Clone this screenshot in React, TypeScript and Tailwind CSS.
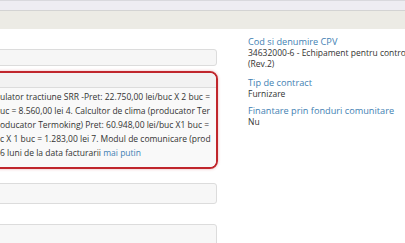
export default function App() {
  const lines = [
    'ulator tractiune SRR -Pret: 22.750,00 lei/buc X 2 buc =',
    'uc = 8.560,00 lei 4. Calcultor de clima (producator Ter',
    'oducator Termoking) Pret: 60.948,00 lei/buc X1 buc =',
    'c X 1 buc = 1.283,00 lei 7. Modul de comunicare (prod',
  ];

  return (
    <div className="w-[405px] h-[243px] overflow-hidden bg-white font-['Open_Sans',sans-serif] text-[#333]">
      {/* top bars */}
      <div className="h-[1px] bg-[#d9d9dd]" />
      <div className="h-[10px] bg-[#eeedf2] border-b border-[#d3d3d3]" />
      <div className="h-[18px] bg-[#ecebe5]" />

      <div className="flex">
        {/* left column, cut off on the left */}
        <div className="w-[228px] -ml-[10px] shrink-0 pt-[20px]">
          <div className="h-[17px] mr-[1px] bg-[#f6f6f6] border border-[#dcdcdc] rounded-[3px]" />

          <div className="mt-[5px] border-2 border-[#c0262c] rounded-[8px] overflow-hidden shadow-[0_0_3px_rgba(192,38,44,0.35)]">
            <div className="h-[15px] bg-[#f2f2f2] border-b border-[#dcdcdc]" />
            <div className="bg-[#f9f9f9] pl-[8px] pt-[2px] pb-[7px] text-[8.5px] leading-[14px]">
              {lines.map((l, i) => (
                <div key={i} className="whitespace-nowrap">{l}</div>
              ))}
              <div className="whitespace-nowrap">
                6 luni de la data facturarii <span className="text-[#3f7fb3]">mai putin</span>
              </div>
            </div>
          </div>

          <div className="mt-[14px] h-[21px] mr-[1px] bg-[#f7f7f7] border border-[#dcdcdc] rounded-[3px]" />
          <div className="mt-[20px] h-[30px] mr-[1px] bg-[#f7f7f7] border border-[#dcdcdc] rounded-[3px]" />
        </div>

        {/* right column */}
        <div className="ml-[30px] pt-[7px] shrink-0 w-[260px]">
          <div className="text-[9.2px] leading-[11px] text-[#3f7fb3]">Cod si denumire CPV</div>
          <div className="text-[8.5px] leading-[11px] whitespace-nowrap">
            34632000-6 - Echipament pentru controlul traficului feroviar
          </div>
          <div className="text-[8.5px] leading-[11px]">(Rev.2)</div>

          <div className="mt-[8px] text-[9.2px] leading-[11px] text-[#3f7fb3]">Tip de contract</div>
          <div className="text-[8.5px] leading-[11px]">Furnizare</div>

          <div className="mt-[6px] text-[9.2px] leading-[11px] text-[#3f7fb3]">Finantare prin fonduri comunitare</div>
          <div className="text-[8.5px] leading-[11px]">Nu</div>
        </div>
      </div>
    </div>
  );
}
